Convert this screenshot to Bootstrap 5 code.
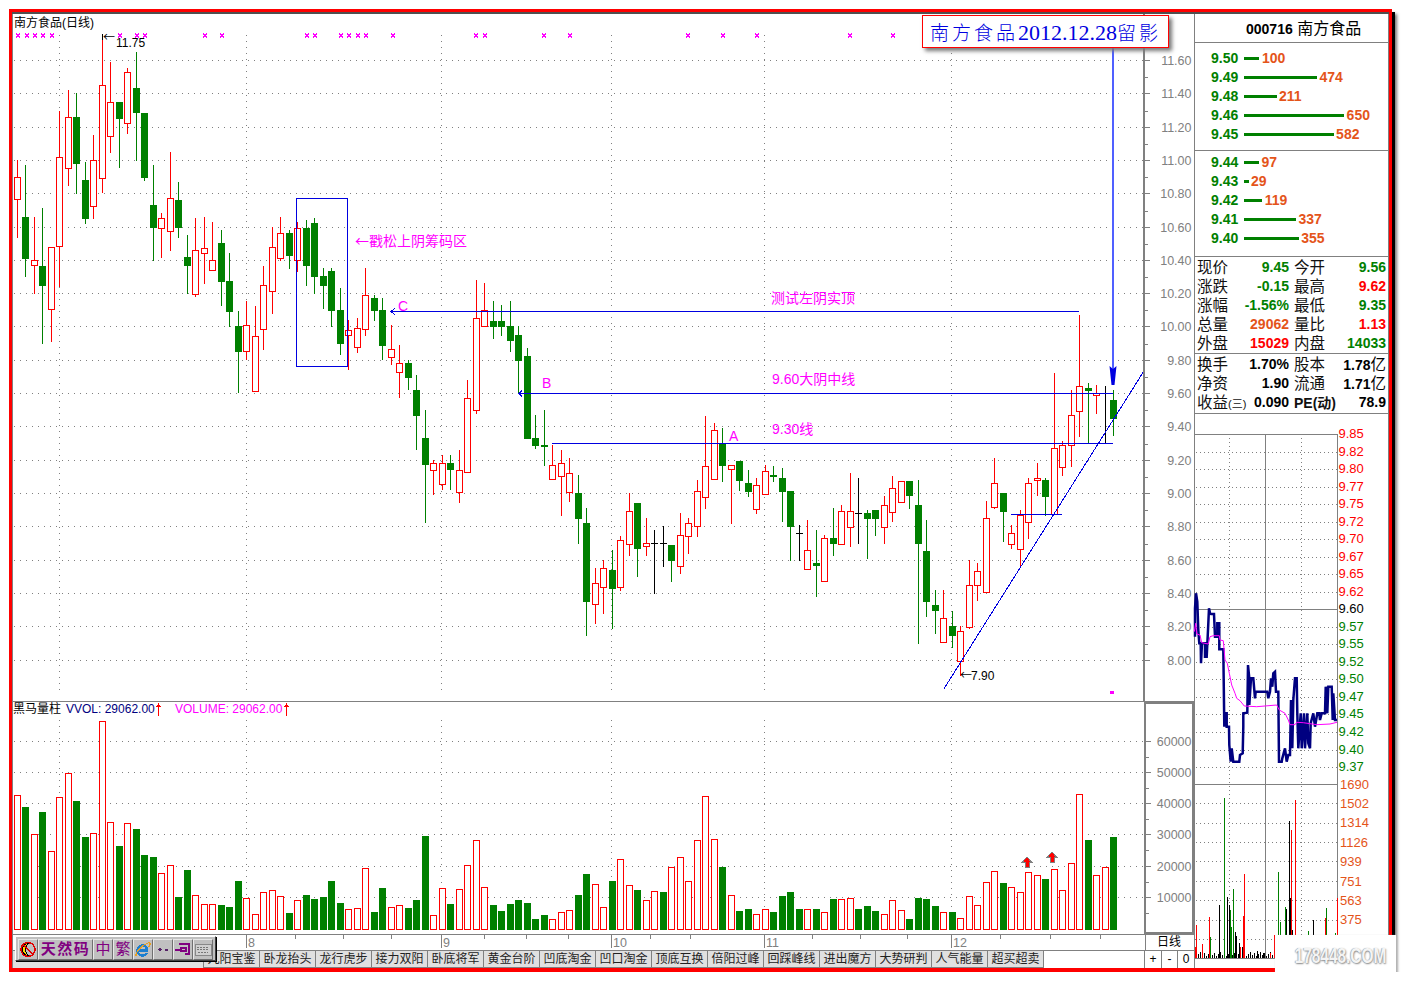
<!DOCTYPE html>
<html lang="zh">
<head>
    <meta charset="UTF-8">
    <meta name="viewport" content="width=device-width, initial-scale=1.0">
    <title>南方食品 日线</title>
    <link rel="stylesheet" href="https://cdn.jsdelivr.net/npm/bootstrap@5.3.0/dist/css/bootstrap.min.css">
    <style>
        body { background: #fff; margin: 0; font-family: "Liberation Sans", "Noto Sans CJK SC", sans-serif; color: #000; overflow: hidden; }
        .win-frame { position: relative; box-sizing: border-box; margin: 9px 0 0 9px; width: 1383px; height: 963px; border: 3px solid #f00; border-bottom-width: 4px; box-shadow: 3px 3px 0 #000, 5px 5px 3px #777; background: #fff; }
        .win-body { height: 956px; border-top: 2px solid #505050; }
        .chart-col { width: 1182px; border-left: 1px solid #808080; }
        .side-col { width: 195px; border-left: 1px solid #808080; border-right: 1px solid #808080; }
        svg { display: block; shape-rendering: crispEdges; overflow: visible; }
        svg text { font-family: "Liberation Sans", "Noto Sans CJK SC", sans-serif; font-size: 12px; shape-rendering: auto; }
        svg text.axis-txt { fill: #808080; font-size: 12.5px; }
        svg text.note-txt { fill: #f0f; font-size: 14px; }
        svg .cjk-arrow { font-family: "Noto Sans CJK SC", sans-serif; }

        .tab-row { height: 18px; border-top: 1px solid #808080; }
        .tab-blank { width: 191px; background: #e0e0e0; border-right: 1px solid #808080; }
        .tab-item { width: 56px; background: #e0e0e0; border-right: 1px solid #808080; border-bottom: 1px solid #808080; font-size: 12px; line-height: 16px; text-align: center; color: #222; }
        .zoom-key { width: 16.6px; border-left: 1px solid #808080; font-size: 12px; line-height: 16px; text-align: center; }

        .head-box { height: 29px; border-bottom: 1px solid #808080; padding-left: 51px; font-size: 16px; line-height: 29px; white-space: nowrap; }
        .head-box b { font-size: 14px; }
        .sell-box { height: 108px; padding: 6px 0 0 16px; border-bottom: 1px solid #808080; }
        .buy-box { height: 106px; padding: 2px 0 0 16px; border-bottom: 1px solid #808080; }
        .book-row { height: 19px; font-size: 14px; font-weight: 700; }
        .book-price { width: 33px; color: #008000; }
        .book-bar { height: 3px; background: #008000; margin-right: 2.5px; }
        .book-qty, .tone-orange { color: #e4541a; }
        .quote-box { height: 97px; padding: 1px 2px 0 2px; border-bottom: 1px solid #808080; }
        .extra-box { height: 60px; padding: 1px 2px 0 2px; border-bottom: 1px solid #808080; }
        .gap-box { height: 20px; }
        .quote-row { height: 19px; line-height: 19px; }
        .quote-half { width: 92px; margin-right: 5px; }
        .quote-half:last-child { margin-right: 0; }
        .quote-lbl { font-size: 15.5px; color: #111; white-space: nowrap; }
        .quote-lbl em { font-style: normal; font-size: 11px; }
        .quote-val { font-size: 14px; font-weight: 700; white-space: nowrap; }
        .quote-val i { font-style: normal; font-weight: 400; font-size: 15.5px; }
        .tone-green { color: #008000; }
        .tone-red { color: #f00; }

        .title-tag { position: absolute; left: 910px; top: 3px; width: 247px; height: 33px; background: #fff; border: 1px solid #f00; box-shadow: 3px 3px 4px #777; color: #0000e0; font-family: "Liberation Serif", "Noto Sans CJK SC", serif; font-size: 22px; line-height: 32px; text-align: center; white-space: nowrap; }
        .title-tag span { font-family: "Noto Sans CJK SC", serif; font-size: 19px; letter-spacing: 3px; font-weight: 300; }

        .tool-strip { position: absolute; left: 3px; top: 924px; height: 25px; padding: 2px; background: #c0c0c0; border: 1px solid #fff; border-right-color: #404040; border-bottom-color: #404040; box-shadow: 1px 1px 0 #000; }
        .tool-key { height: 21px; width: 20px; background: #c0c0c0; border: 1px solid #e8e8e8; border-right-color: #707070; border-bottom-color: #707070; color: #800080; font-size: 15px; line-height: 18px; text-align: center; overflow: hidden; }
        .tool-wide { width: 55px; font-weight: 700; letter-spacing: 1.5px; white-space: nowrap; }

        .mark-box { position: absolute; left: 1263px; top: 923px; width: 121px; height: 41px; background: #fff; box-shadow: 1px 1px 2px #bbb; line-height: 41px; text-align: center; }
        .mark-txt { display: inline-block; transform: scaleX(.7); color: #f4f4f4; font-weight: 700; font-size: 22px; text-shadow: 1px 1px 2px #888, -1px 0 1px #aaa; }
    </style>
</head>
<body>
    <div class="win-frame">
        <div class="win-body d-flex">
            <!-- K线和量柱 -->
            <div class="chart-col d-flex flex-column">
                <svg id="kChart" width="1181" height="687" viewBox="13 14 1181 687"></svg>
                <svg id="volChart" width="1181" height="249" viewBox="13 701 1181 249"></svg>
                <div class="tab-row d-flex">
                    <div class="tab-blank"></div>
                    <div id="tabList" class="d-flex"></div>
                    <div class="flex-grow-1"></div>
                    <div class="zoom-key">+</div>
                    <div class="zoom-key">-</div>
                    <div class="zoom-key">0</div>
                </div>
            </div>
            <!-- 右侧行情 -->
            <div class="side-col d-flex flex-column">
                <div class="head-box"><b>000716</b> 南方食品</div>
                <div id="sellBox" class="sell-box"></div>
                <div id="buyBox" class="buy-box"></div>
                <div id="quoteBox" class="quote-box"></div>
                <div id="extraBox" class="extra-box"></div>
                <div class="gap-box"></div>
                <svg id="miniChart" width="193" height="534" viewBox="1195 434 193 534"></svg>
            </div>
        </div>

        <div class="title-tag"><span>南方食品</span>2012.12.28<span>留影</span></div>

        <div class="tool-strip d-flex">
            <div class="tool-key">
                <svg width="18" height="19" viewBox="0 0 18 19">
                    <path d="M10 3a6.500 6.500 0 0 0 0 13a8 8 0 0 1 0-13z" fill="#ffd800" stroke="#000"/>
                    <circle cx="9" cy="9.500" r="7" fill="none" stroke="#e00000" stroke-width="1.500"/>
                    <line x1="4" y1="4.500" x2="14" y2="14.500" stroke="#e00000" stroke-width="1.500"/>
                </svg>
            </div>
            <div class="tool-key tool-wide">天然码</div>
            <div class="tool-key">中</div>
            <div class="tool-key">繁</div>
            <div class="tool-key">
                <svg width="18" height="19" viewBox="0 0 18 19">
                    <path d="M4 10.500h9c0-3-2-5-4.500-5S3.500 7.500 3.500 10.500s2 5 5 5c2 0 3.500-1 4.500-2.500" fill="none" stroke="#1c7fd0" stroke-width="2.500"/>
                    <path d="M2 16C1 12 8 5 15 2.500c2 1 1 3-.5 5" fill="none" stroke="#e8a020" stroke-width="1.200"/>
                </svg>
            </div>
            <div class="tool-key">
                <svg width="18" height="19" viewBox="0 0 18 19">
                    <circle cx="6" cy="9.500" r="1.800" fill="#552266"/>
                    <circle cx="12.500" cy="10" r="1.300" fill="#552266"/>
                </svg>
            </div>
            <div class="tool-key">
                <svg width="18" height="19" viewBox="0 0 18 19">
                    <path d="M1 9.500h6M5 4h10v10h-4M7 8h5v3H7z" fill="none" stroke="#800080" stroke-width="2"/>
                </svg>
            </div>
            <div class="tool-key">
                <svg width="18" height="19" viewBox="0 0 18 19">
                    <rect x="1" y="4" width="16" height="11" fill="#d0d0d0" stroke="#888"/>
                    <path d="M3 7h12M3 9.500h12M4 12h10" stroke="#777" stroke-dasharray="2 1"/>
                </svg>
            </div>
        </div>

        <div class="mark-box"><span class="mark-txt">178448.COM</span></div>
    </div>

    <script src="https://cdn.jsdelivr.net/npm/bootstrap@5.3.0/dist/js/bootstrap.bundle.min.js"></script>
    <script>
        const GRAY = '#808080', RED = '#f00', GREEN = '#008000', BLUE = '#0000e0', PINK = '#f0f';

        const ln = (x1, y1, x2, y2, c, extra = '') => `<line x1="${x1}" y1="${y1}" x2="${x2}" y2="${y2}" stroke="${c}" ${extra}/>`;
        const dots = (x1, y1, x2, y2) => ln(x1, y1, x2, y2, GRAY, 'stroke-dasharray="1 5"');
        const txt = (x, y, s, cls = '', extra = '') => `<text x="${x}" y="${y}" class="${cls}" ${extra}>${s}</text>`;
        const barX = i => 17.5 + 17 * Math.floor(i / 2) + (i % 2 ? 8 : 0);

        // 蜡烛 [高, 实体上, 实体下, 低, 颜色] 数值是放大3倍的y
        const upper = [
            [480,532,596,713,'r'],[495,651,777,830,'g'],[651,781,796,881,'r'],[624,798,857,1031,'g'],[742,742,926,1025,'r'],
            [334,472,737,862,'r'],[270,352,503,557,'r'],[280,351,491,581,'g'],[486,540,657,671,'g'],[405,481,617,656,'r'],
            [110,256,533,580,'r'],[186,307,407,459,'r'],[306,306,357,503,'g'],[205,217,368,401,'r'],[156,264,339,482,'g'],
            [339,339,533,543,'g'],[495,615,684,782,'g'],[640,655,683,773,'r'],[456,595,692,752,'r'],[546,600,684,713,'g'],
            [705,771,798,881,'g'],[654,751,881,890,'r'],[651,745,758,851,'r'],[666,781,811,811,'r'],[690,729,846,917,'g'],
            [759,843,936,980,'g'],[933,978,1056,1179,'g'],[903,976,1053,1080,'r'],[918,1009,1173,1176,'r'],[798,856,986,1050,'r'],
            [682,742,872,942,'r'],[651,700,773,782,'r'],[690,699,768,807,'g'],[666,685,781,816,'r'],[660,684,798,858,'g'],
            [655,669,831,881,'g'],[804,828,858,927,'g'],[804,813,933,980,'g'],[864,930,1032,1065,'g'],[960,990,1006,1110,'r'],
            [954,985,1040,1060,'r'],[804,886,986,1007,'r'],[885,894,933,963,'g'],[894,930,1038,1080,'g'],[975,1047,1071,1095,'r'],
            [1035,1089,1116,1194,'r'],[1080,1089,1134,1170,'g'],[1125,1170,1248,1350,'g'],[1230,1314,1395,1569,'g'],[1380,1389,1410,1485,'r'],
            [1365,1389,1452,1470,'r'],[1365,1389,1410,1470,'g'],[1350,1410,1476,1509,'r'],[1140,1194,1416,1416,'r']
        ].map(c => [c[0] / 3, c[1] / 3, c[2] / 3, c[3] / 3, c[4]]);
        const lower = [
            [30,145,421,431,'r'],[40,121,169,169,'r'],[94,153,171,207,'g'],[105,153,171,198,'g'],[94,168,213,246,'g'],
            [168,195,273,370,'g'],[234,258,507,507,'g'],[435,504,528,537,'g'],[420,525,530,588,'g'],[525,586,626,626,'r'],
            [540,580,617,738,'r'],[564,610,665,696,'r'],[615,669,747,822,'g'],[714,759,996,1098,'g'],[894,940,1001,1062,'r'],
            [870,895,950,1032,'r'],[840,900,957,1077,'g'],[798,811,950,963,'r'],[669,724,821,858,'r'],[699,699,837,921,'g'],
            [744,820,827,858,'r'],[780,820,820,972,'k'],[768,820,820,891,'k'],[825,825,873,936,'g'],[729,796,887,912,'r'],
            [744,760,797,852,'r'],[630,664,767,801,'r'],[438,589,680,717,'r'],[459,481,626,626,'r'],[474,520,588,636,'g'],
            [586,586,596,762,'r'],[573,573,633,663,'g'],[600,639,666,681,'g'],[624,646,716,732,'r'],[585,604,671,671,'r'],
            [588,615,621,636,'g'],[594,624,666,756,'g'],[663,663,771,873,'g'],[765,790,790,873,'k'],[750,841,896,896,'r'],
            [780,879,888,981,'g'],[795,805,932,932,'r'],[714,804,822,858,'g'],[705,724,821,821,'r'],[609,724,770,831,'r'],
            [624,730,730,822,'k'],[720,729,747,867,'g'],[720,720,747,798,'g'],[678,706,770,822,'r'],[618,655,725,756,'r'],
            [634,634,695,695,'r'],[633,633,678,717,'g'],[630,705,822,1122,'g'],[750,843,996,1041,'g'],[960,1005,1023,1092,'g'],
            [960,1045,1115,1115,'r'],[1023,1068,1098,1133,'g'],[1068,1084,1172,1218,'r'],[870,946,1070,1077,'r'],[879,904,946,993,'r'],
            [693,745,965,965,'r'],[564,640,710,717,'r'],[669,669,726,816,'g'],[765,790,821,837,'r'],[720,736,836,888,'r'],
            [624,640,755,807,'r'],[579,624,631,678,'r'],[624,630,681,738,'g'],[309,535,732,732,'r'],[513,526,590,618,'r'],
            [360,436,526,591,'r'],[135,349,422,501,'r'],[339,354,362,520,'g'],[345,370,376,432,'r'],[348,520,520,520,'k'],
            [360,390,447,498,'g']
        ].map(c => [270 + c[0] / 3, 270 + c[1] / 3, 270 + c[2] / 3, 270 + c[3] / 3, c[4]]);
        const candles = upper.concat(lower);

        let k = '';
        // 价格网格
        const prices = ['11.60','11.40','11.20','11.00','10.80','10.60','10.40','10.20','10.00','9.80','9.60','9.40','9.20','9.00','8.80','8.60','8.40','8.20','8.00'];
        const priceY = [60,93,127,160,193,227,260,293,326,360,393,426,460,493,526,560,593,626,660];
        prices.forEach((p, n) => {
            const y = priceY[n] + .5;
            k += dots(14, y, 1143, y);
            k += ln(1144, y, 1150, y, GRAY);
            k += ln(1144, y - 16.5, 1148, y - 16.5, GRAY);
            k += txt(1191.5, y + 4.5, p, 'axis-txt', 'text-anchor="end"');
        });
        const months = [59.5, 246.5, 441.5, 611.5, 764.5, 951.5];
        months.forEach(x => { k += dots(x, 35, x, 690); });
        k += ln(1144, 14, 1144, 701, GRAY, 'stroke-width="2"');
        k += ln(13, 701.5, 1194, 701.5, GRAY);

        candles.forEach((c, i) => {
            const x = barX(i), col = c[4] === 'r' ? RED : c[4] === 'g' ? GREEN : '#000';
            const hi = Math.round(c[0]), top = Math.round(c[1]), bot = Math.round(c[2]), lo = Math.round(c[3]);
            k += ln(x, hi, x, lo, col);
            if (c[4] === 'r') {
                k += `<rect x="${x - 3}" y="${top + .5}" width="6" height="${Math.max(bot - top, 2)}" fill="#fff" stroke="${RED}"/>`;
            } else if (c[4] === 'g') {
                k += `<rect x="${x - 3.5}" y="${top}" width="7" height="${Math.max(bot - top, 2)}" fill="${GREEN}"/>`;
            } else {
                k += ln(x - 3.5, top + .5, x + 3.5, top + .5, col);
            }
        });

        // 顶部标记
        [18,27,35,43,52,120,137,145,205,222,307,315,341,349,358,366,393,476,485,544,570,688,723,757,850,893].forEach(x => {
            k += `<path d="M${x - 2} 33.500l4 4M${x + 2} 33.500l-4 4" stroke="${PINK}" stroke-width="1.200"/>`;
        });
        k += `<rect x="1110" y="691" width="4" height="3" fill="${PINK}"/>`;

        k += txt(14, 27, '南方食品(日线)');
        k += ln(102.5, 34, 102.5, 40, '#000') + txt(103, 42, '<tspan class="cjk-arrow">←</tspan>', '', 'font-size="12"') + txt(116, 46.500, '11.75');
        k += txt(960, 680, '<tspan class="cjk-arrow">←</tspan>') + txt(971, 680, '7.90');

        // 标注线
        k += `<rect x="296.500" y="198.500" width="51" height="168" fill="none" stroke="${BLUE}"/>`;
        k += ln(391, 311.5, 1079, 311.5, BLUE) + `<path d="M395 308l-4 3.500 4 3.500" fill="none" stroke="${BLUE}"/>`;
        k += ln(519, 393.5, 1113, 393.5, BLUE) + `<path d="M522 390.500l-3 3 3 3" fill="none" stroke="${BLUE}"/>`;
        k += ln(552, 443.5, 1113, 443.5, BLUE);
        k += ln(1011, 514.5, 1062, 514.5, BLUE);
        k += ln(943.5, 689.5, 1143, 372.5, BLUE);
        k += ln(1113, 47, 1113, 370, '#5060ff', 'stroke-width="2"');
        k += `<path d="M1109.500 366l3.500 3 3.500-3-2 19h-3z" fill="${BLUE}" style="shape-rendering:auto"/>`;

        k += txt(355, 246, '<tspan class="cjk-arrow">←</tspan>戳松上阴筹码区', 'note-txt');
        k += txt(771, 303, '测试左阴实顶', 'note-txt');
        k += txt(772, 384, '9.60大阴中线', 'note-txt');
        k += txt(772, 434, '9.30线', 'note-txt');
        k += txt(398, 311, 'C', 'note-txt') + txt(542, 388, 'B', 'note-txt') + txt(729, 441, 'A', 'note-txt');
        document.getElementById('kChart').innerHTML = k;

        // 量柱 顶部y和颜色
        const vols = [
            [301,'r'],[336,'g'],[418,'r'],[351,'g'],[469,'r'],[307,'r'],[235,'r'],[318,'g'],[426,'g'],[415,'r'],
            [79,'r'],[382,'r'],[453,'g'],[385,'r'],[402,'g'],[480,'g'],[486,'g'],[535,'r'],[511,'r'],[606,'g'],
            [525,'g'],[601,'r'],[628,'r'],[628,'r'],[630,'g'],[636,'g'],[558,'g'],[610,'r'],[658,'r'],[592,'r'],
            [586,'r'],[604,'r'],[654,'g'],[616,'r'],[600,'g'],[612,'g'],[606,'g'],[558,'g'],[624,'g'],[643,'r'],
            [640,'r'],[520,'r'],[651,'g'],[579,'g'],[637,'r'],[631,'r'],[639,'g'],[615,'g'],[423,'g'],[661,'r'],
            [580,'r'],[627,'g'],[583,'r'],[511,'r'],[436,'r'],[577,'r'],[630,'g'],[648,'g'],[627,'g'],[615,'g'],
            [624,'g'],[672,'g'],[660,'g'],[673,'r'],[652,'r'],[646,'r'],[600,'g'],[537,'g'],[568,'r'],[637,'r'],
            [558,'g'],[493,'r'],[571,'r'],[585,'g'],[616,'r'],[589,'r'],[591,'g'],[517,'r'],[487,'r'],[559,'r'],
            [436,'r'],[304,'r'],[433,'r'],[516,'g'],[601,'r'],[648,'g'],[642,'g'],[658,'r'],[643,'r'],[651,'g'],
            [603,'g'],[591,'g'],[642,'g'],[643,'r'],[642,'g'],[652,'r'],[612,'g'],[613,'r'],[610,'r'],[642,'g'],
            [633,'g'],[648,'g'],[658,'r'],[616,'r'],[646,'r'],[672,'g'],[609,'g'],[612,'g'],[633,'g'],[652,'r'],
            [651,'g'],[670,'r'],[604,'r'],[631,'r'],[562,'r'],[529,'r'],[564,'g'],[577,'r'],[592,'r'],[532,'r'],
            [541,'r'],[552,'g'],[523,'r'],[586,'r'],[505,'r'],[298,'r'],[435,'g'],[541,'r'],[517,'r'],[426,'g']
        ];
        let v = '';
        [['60000',741.5],['50000',772.5],['40000',803.5],['30000',834.5],['20000',866.5],['10000',897.5]].forEach(a => {
            v += dots(14, a[1], 1143, a[1]);
            v += ln(1145, a[1], 1151, a[1], GRAY);
            v += ln(1145, a[1] + 15.5, 1149, a[1] + 15.5, GRAY);
            v += txt(1191.5, a[1] + 4.5, a[0], 'axis-txt', 'text-anchor="end"');
        });
        months.forEach(x => { v += dots(x, 720, x, 930); });
        v += `<rect x="1145" y="703" width="48" height="230" fill="none" stroke="${GRAY}" stroke-width="2"/>`;
        vols.forEach((b, i) => {
            const x = barX(i), top = Math.round(695 + b[0] / 3);
            if (b[1] === 'r') v += `<rect x="${x - 3}" y="${top + .5}" width="6" height="${929 - top}" fill="#fff" stroke="${RED}"/>`;
            else v += `<rect x="${x - 3.5}" y="${top}" width="7" height="${930 - top}" fill="${GREEN}"/>`;
        });
        v += txt(13, 713, '黑马量柱');
        v += txt(66, 713, 'VVOL: 29062.00', '', 'fill="#000080"');
        v += txt(175, 713, 'VOLUME: 29062.00', '', `fill="${PINK}"`);
        [158.5, 286.5].forEach(x => {
            v += ln(x, 704, x, 716, RED) + `<path d="M${x - 2.5} 707l2.500-4 2.500 4z" fill="${RED}"/>`;
        });
        [[1027, 857], [1052, 852]].forEach(a => {
            v += `<path d="M${a[0]} ${a[1]}l5 5.500h-3v5h-4v-5h-3z" fill="${RED}" stroke="#808080"/>`;
        });
        // 日期轴
        v += ln(13, 934.5, 1194, 934.5, GRAY);
        [295,343,391,484,526,568,650,690,812,860,907,1000,1050,1100].forEach(x => { v += ln(x + .5, 935, x + .5, 939, GRAY); });
        [[247,'8'],[442,'9'],[612,'10'],[765,'11'],[952,'12']].forEach(a => {
            v += ln(a[0] - .5, 935, a[0] - .5, 948, GRAY) + txt(a[0] + 1, 947, a[1], 'axis-txt');
        });
        v += ln(1145, 935, 1145, 950, GRAY);
        v += txt(1157, 946, '日线');
        document.getElementById('volChart').innerHTML = v;

        // 指标标签
        document.getElementById('tabList').innerHTML = ['九阳宝鉴','卧龙抬头','龙行虎步','接力双阳','卧底将军','黄金台阶','凹底淘金','凹口淘金','顶底互换','倍阳过峰','回踩峰线','进出魔方','大势研判','人气能量','超买超卖']
            .map(t => `<div class="tab-item">${t}</div>`).join('');

        // 买卖盘
        const bookRow = r => `<div class="book-row d-flex align-items-center"><span class="book-price">${r[0]}</span><span class="book-bar" style="width:${(r[1] * 0.154).toFixed(1)}px"></span><span class="book-qty">${r[1]}</span></div>`;
        document.getElementById('sellBox').innerHTML = [['9.50',100],['9.49',474],['9.48',211],['9.46',650],['9.45',582]].map(bookRow).join('');
        document.getElementById('buyBox').innerHTML = [['9.44',97],['9.43',29],['9.42',119],['9.41',337],['9.40',355]].map(bookRow).join('');

        const half = (a, b, tone) => `<div class="quote-half d-flex justify-content-between"><span class="quote-lbl">${a}</span><span class="quote-val ${tone}">${b}</span></div>`;
        const quoteRow = r => `<div class="quote-row d-flex">${half(r[0], r[1], r[2])}${half(r[3], r[4], r[5])}</div>`;
        document.getElementById('quoteBox').innerHTML = [
            ['现价','9.45','tone-green','今开','9.56','tone-green'],
            ['涨跌','-0.15','tone-green','最高','9.62','tone-red'],
            ['涨幅','-1.56%','tone-green','最低','9.35','tone-green'],
            ['总量','29062','tone-orange','量比','1.13','tone-red'],
            ['外盘','15029','tone-red','内盘','14033','tone-green']
        ].map(quoteRow).join('');
        document.getElementById('extraBox').innerHTML = [
            ['换手','1.70%','','股本','1.78<i>亿</i>',''],
            ['净资','1.90','','流通','1.71<i>亿</i>',''],
            ['收益<em>(三)</em>','0.090','','<span class="quote-val">PE(动)</span>','78.9','']
        ].map(quoteRow).join('');

        // 分时图
        let m = '';
        const redLbls = ['9.85','9.82','9.80','9.77','9.75','9.72','9.70','9.67','9.65','9.62'];
        const greenLbls = ['9.57','9.55','9.52','9.50','9.47','9.45','9.42','9.40','9.37'];
        redLbls.concat(['9.60'], greenLbls).forEach((p, n) => {
            const y = Math.round(434 + n * 17.53) + .5;
            if (n && p !== '9.60') m += ln(1196, y, 1337, y, GRAY, 'stroke-dasharray="1 3"');
            const col = n < 10 ? RED : n === 10 ? '#000' : GREEN;
            m += `<text x="1338.5" y="${y + 3.5}" fill="${col}" style="font-size:13px">${p}</text>`;
        });
        [['1690',784.5],['1502',803.5],['1314',823],['1126',842.5],['939',861.5],['751',881.5],['563',900.5],['375',920]].forEach((a, n) => {
            if (n) m += ln(1196, Math.floor(a[1]) + .5, 1337, Math.floor(a[1]) + .5, GRAY, 'stroke-dasharray="1 3"');
            m += `<text x="1340" y="${a[1] + 4}" fill="#e4541a" style="font-size:13px">${a[0]}</text>`;
        });
        m += ln(1195, 939.5, 1337, 939.5, GRAY, 'stroke-dasharray="1 3"');
        [1229.5, 1301.5].forEach(x => { m += ln(x, 434, x, 958, GRAY, 'stroke-dasharray="1 3"'); });
        m += ln(1265.5, 434, 1265.5, 958, GRAY);
        m += ln(1195, 434.5, 1337, 434.5, GRAY) + ln(1195, 609.5, 1337, 609.5, GRAY) + ln(1195, 784.5, 1337, 784.5, GRAY) + ln(1195, 958.5, 1337, 958.5, GRAY);
        m += ln(1337.5, 434, 1337.5, 958, GRAY);

        const toPts = a => a.map(p => `${(1190 + p[0] / 3).toFixed(1)},${(430 + p[1] / 3).toFixed(1)}`).join(' ');
        const priceLine = [[15,620],[15,535],[18,490],[22,515],[25,600],[28,640],[32,640],[33,700],[36,640],[45,640],[45,680],[50,680],[54,600],[57,535],[60,550],[63,552],[72,552],[75,620],[82,620],[82,580],[88,580],[88,658],[100,658],[103,890],[104,850],[110,850],[110,890],[117,890],[118,945],[122,995],[125,955],[130,995],[148,995],[150,975],[158,970],[160,890],[160,850],[172,848],[174,705],[178,745],[178,825],[183,745],[190,745],[195,805],[197,785],[232,785],[235,805],[240,785],[243,745],[247,770],[250,730],[255,725],[258,785],[265,785],[267,995],[275,995],[277,985],[285,955],[290,995],[295,975],[300,975],[303,810],[307,955],[310,810],[315,745],[320,745],[322,850],[325,955],[332,850],[335,955],[342,850],[345,955],[352,850],[355,940],[360,955],[362,880],[370,850],[375,890],[382,850],[388,850],[390,870],[395,850],[405,850],[407,770],[412,850],[415,770],[425,770],[428,870],[430,790],[435,870],[441,870]];
        const avgLine = [[13,605],[17,580],[20,612],[30,615],[35,638],[55,642],[60,620],[70,617],[88,617],[90,630],[100,632],[105,690],[112,700],[118,730],[125,765],[135,790],[140,805],[150,812],[163,828],[200,830],[260,825],[268,840],[285,850],[295,870],[300,884],[315,884],[320,877],[340,878],[380,884],[420,882],[441,877]];
        m += `<polyline points="${toPts(priceLine)}" fill="none" stroke="#000080" stroke-width="2.500" style="shape-rendering:auto"/>`;
        m += `<polyline points="${toPts(avgLine)}" fill="none" stroke="${PINK}" style="shape-rendering:auto"/>`;

        // 分时量
        for (let i = 0; i < 46; i++) {
            const x = 1196.5 + i * 2;
            m += ln(x, 957 - ((i * 7) % 5 + 1), x, 958, '#000');
        }
        [[18,435,RED],[16,500,RED],[36,492,'#000'],[38,492,RED],[58,410,RED],[60,470,GREEN],[88,375,'#000'],[103,55,GREEN],[112,350,'#000'],[118,375,'#000'],[121,390,GREEN],[125,440,GREEN],[130,327,GREEN],[137,455,'#000'],[139,468,'#000'],[148,490,'#000'],[152,500,RED],[157,500,'#000'],[162,282,RED],[160,408,RED],[202,512,'#000'],[220,520,'#000'],[240,520,RED],[252,465,RED],[265,277,GREEN],[271,425,GREEN],[286,380,GREEN],[289,387,'#000'],[297,122,'#000'],[301,355,'#000'],[304,150,RED],[306,450,'#000'],[316,60,RED],[355,452,GREEN],[370,420,'#000'],[406,413,RED],[409,384,GREEN],[436,460,GREEN],[442,355,RED]].forEach(s => {
            const x = Math.floor(1190 + s[0] / 3) + .5;
            m += ln(x, Math.round(780 + s[1] / 3), x, 958, s[2]);
        });
        document.getElementById('miniChart').innerHTML = m;
    </script>
</body>
</html>
